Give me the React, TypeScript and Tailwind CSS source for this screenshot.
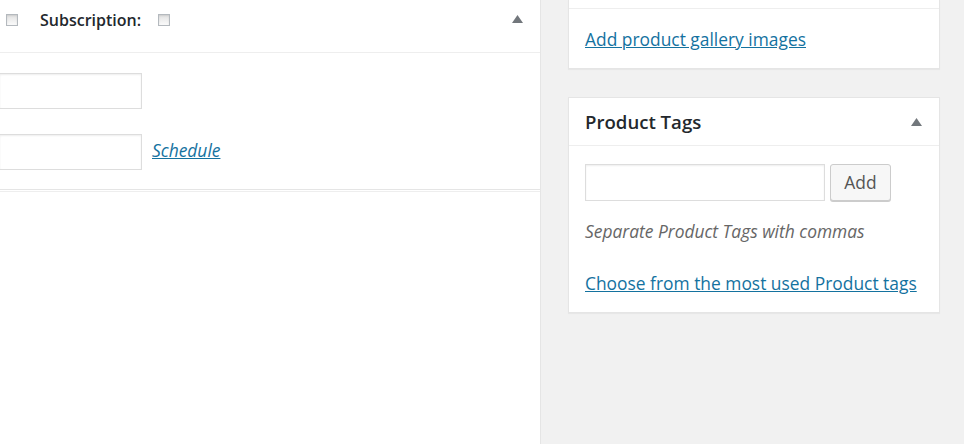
import React from "react";

function Checkbox() {
  return (
    <span className="inline-block w-[12px] h-[12px] border border-[#b4b9be] bg-gradient-to-b from-[#e2e2e2] to-[#fbfbfb] shadow-[inset_0_1px_2px_rgba(0,0,0,0.1)]" />
  );
}

function Triangle() {
  return (
    <svg width="11" height="8" viewBox="0 0 11 8" className="block">
      <path d="M5.5 0 L11 8 L0 8 Z" fill="#72777c" />
    </svg>
  );
}

export default function App() {
  return (
    <div className="flex w-[964px] h-[444px] overflow-hidden bg-[#f1f1f1] font-['Open_Sans',sans-serif] text-[#23282d]">
      <div className="w-[541px] shrink-0 bg-white border-r border-[#e5e5e5] flex flex-col">
        <div className="border-b border-[#e5e5e5]">
          <div className="h-[53px] border-b border-[#eee] pl-[6px] pr-[17px] pt-[8px]">
            <div className="h-[24px] flex items-center">
              <Checkbox />
              <span className="ml-[22px] text-[16px] font-semibold leading-[24px]">Subscription:</span>
              <span className="ml-[17px] flex"><Checkbox /></span>
              <span className="ml-auto -mt-[3px]">
                <Triangle />
              </span>
            </div>
          </div>
          <div className="pt-[20px] pb-[19px] flex flex-col gap-[25px]">
            <div className="w-[142px] h-[36px] border border-l-0 border-[#ddd] shadow-[inset_0_1px_2px_rgba(0,0,0,0.07)]" />
            <div className="flex items-center">
              <div className="w-[142px] h-[36px] border border-l-0 border-[#ddd] shadow-[inset_0_1px_2px_rgba(0,0,0,0.07)]" />
              <a className="ml-[10px] -mt-[3px] text-[17.4px] italic text-[#14729f] underline">Schedule</a>
            </div>
          </div>
        </div>
        <div className="mt-[1px] border-t border-[#eee]" />
      </div>

      <div className="flex-1 pl-[27px] pr-[24px]">
        <div className="bg-white border border-t-0 border-[#e5e5e5] shadow-[0_1px_1px_rgba(0,0,0,0.04)]">
          <div className="h-[9px] border-b border-[#eee]" />
          <div className="pl-[16px] pt-[18px] pb-[16px] leading-[24px]">
            <a className="text-[17.4px] text-[#14729f] underline">Add product gallery images</a>
          </div>
        </div>

        <div className="mt-[28px] bg-white border border-[#e5e5e5] shadow-[0_1px_1px_rgba(0,0,0,0.04)]">
          <div className="h-[48px] border-b border-[#eee] flex items-center pl-[16px] pr-[17px]">
            <span className="text-[18.6px] font-semibold text-[#23282d]">Product Tags</span>
            <span className="ml-auto">
              <Triangle />
            </span>
          </div>
          <div className="pl-[16px] pt-[18px] pb-[16px]">
            <div className="flex items-center">
              <div className="w-[240px] h-[37px] border border-[#ddd] shadow-[inset_0_1px_2px_rgba(0,0,0,0.07)]" />
              <button className="ml-[5px] w-[61px] h-[37px] rounded-[3px] border border-[#ccc] bg-[#f7f7f7] shadow-[0_1px_0_#ccc] text-[17.4px] text-[#555]">
                Add
              </button>
            </div>
            <p className="mt-[18px] text-[17.4px] italic text-[#666] leading-[24px]">
              Separate Product Tags with commas
            </p>
            <p className="mt-[28px] leading-[24px]">
              <a className="text-[17.4px] text-[#14729f] underline">Choose from the most used Product tags</a>
            </p>
          </div>
        </div>
      </div>
    </div>
  );
}
